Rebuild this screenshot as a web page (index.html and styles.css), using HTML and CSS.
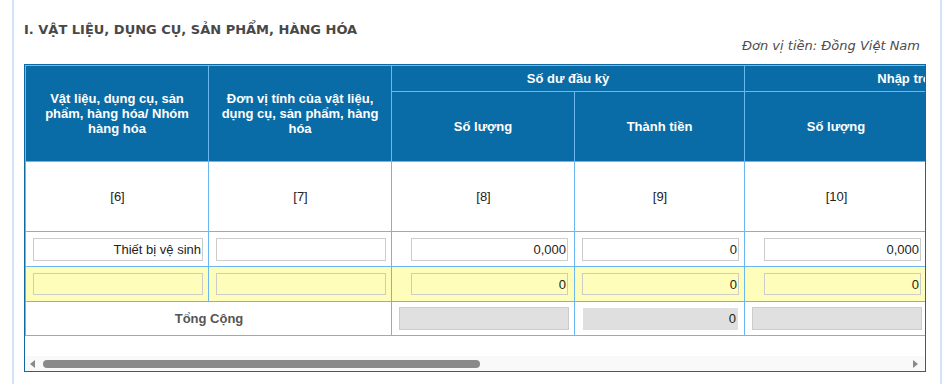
FILE: index.html
```html
<!DOCTYPE html>
<html lang="vi">
<head>
    <meta charset="UTF-8">
    <meta name="viewport" content="width=device-width, initial-scale=1.0">
    <title>Vật liệu, dụng cụ, sản phẩm, hàng hóa</title>
    <link rel="stylesheet" href="styles.css">
</head>
<body>
    <div class="page">
        <h3 class="section-title">I. VẬT LIỆU, DỤNG CỤ, SẢN PHẨM, HÀNG HÓA</h3>
        <div class="unit">Đơn vị tiền: Đồng Việt Nam</div>

        <div class="grid-box">
            <div class="grid-view">
                <table class="grid">
                    <colgroup>
                        <col class="w-a"><col class="w-a">
                        <col class="w-a"><col class="w-b">
                        <col class="w-a"><col class="w-b">
                        <col class="w-a"><col class="w-b">
                        <col class="w-a"><col class="w-b">
                    </colgroup>
                    <thead>
                        <tr class="head-top">
                            <th rowspan="2">Vật liệu, dụng cụ, sản phẩm, hàng hóa/ Nhóm hàng hóa</th>
                            <th rowspan="2">Đơn vị tính của vật liệu, dụng cụ, sản phẩm, hàng hóa</th>
                            <th colspan="2">Số dư đầu kỳ</th>
                            <th colspan="2">Nhập trong kỳ</th>
                            <th colspan="2">Xuất trong kỳ</th>
                            <th colspan="2">Số dư cuối kỳ</th>
                        </tr>
                        <tr class="head-sub">
                            <th>Số lượng</th><th>Thành tiền</th>
                            <th>Số lượng</th><th>Thành tiền</th>
                            <th>Số lượng</th><th>Thành tiền</th>
                            <th>Số lượng</th><th>Thành tiền</th>
                        </tr>
                    </thead>
                    <tbody>
                        <tr class="col-no">
                            <td>[6]</td><td>[7]</td><td>[8]</td><td>[9]</td><td>[10]</td>
                            <td>[11]</td><td>[12]</td><td>[13]</td><td>[14]</td><td>[15]</td>
                        </tr>
                        <tr class="row-item">
                            <td><input class="txt" type="text" value="Thiết bị vệ sinh"></td>
                            <td><input class="txt" type="text" value=""></td>
                            <td><input class="num" type="text" value="0,000"></td>
                            <td><input class="num" type="text" value="0"></td>
                            <td><input class="num" type="text" value="0,000"></td>
                            <td><input class="num" type="text" value="0"></td>
                            <td><input class="num" type="text" value="0,000"></td>
                            <td><input class="num" type="text" value="0"></td>
                            <td><input class="num" type="text" value="0,000"></td>
                            <td><input class="num" type="text" value="0"></td>
                        </tr>
                        <tr class="row-new">
                            <td><input class="txt" type="text" value=""></td>
                            <td><input class="txt" type="text" value=""></td>
                            <td><input class="num" type="text" value="0"></td>
                            <td><input class="num" type="text" value="0"></td>
                            <td><input class="num" type="text" value="0"></td>
                            <td><input class="num" type="text" value="0"></td>
                            <td><input class="num" type="text" value="0"></td>
                            <td><input class="num" type="text" value="0"></td>
                            <td><input class="num" type="text" value="0"></td>
                            <td><input class="num" type="text" value="0"></td>
                        </tr>
                        <tr class="row-total">
                            <td colspan="2" class="total-label">Tổng Cộng</td>
                            <td><input class="sum" type="text" value="" readonly></td>
                            <td><span class="sum-plain">0</span></td>
                            <td><input class="sum" type="text" value="" readonly></td>
                            <td><span class="sum-plain">0</span></td>
                            <td><input class="sum" type="text" value="" readonly></td>
                            <td><span class="sum-plain">0</span></td>
                            <td><input class="sum" type="text" value="" readonly></td>
                            <td><span class="sum-plain">0</span></td>
                        </tr>
                    </tbody>
                </table>
            </div>
            <div class="hscroll">
                <svg class="arrow" width="5" height="8" viewBox="0 0 5 8"><path d="M5 0 L0 4 L5 8 Z" fill="#8a8a8a"/></svg>
                <div class="track"><div class="thumb"></div></div>
                <svg class="arrow" width="5" height="8" viewBox="0 0 5 8"><path d="M0 0 L5 4 L0 8 Z" fill="#8a8a8a"/></svg>
            </div>
        </div>
    </div>
</body>
</html>
```

FILE: styles.css
```css
body {
    margin: 0;
    font-family: "Liberation Sans", Arial, sans-serif;
    font-size: 13px;
    background-color: #fff;
}


.page {
    box-sizing: border-box;
    width: 930px;
    min-height: 384px;
    margin-left: 12px;
    padding: 22px 14px 0 10px;
    border-left: 2px solid #cfe4f9;
    border-right: 2px solid #cfe4f9;
}


.section-title {
    margin: 0;
    font-family: "DejaVu Sans", Verdana, sans-serif;
    font-size: 13px;
    font-weight: bold;
    line-height: 16px;
    color: #484848;
}


.unit {
    padding-right: 6px;
    margin-bottom: 10px;
    text-align: right;
    font-family: "DejaVu Sans", Verdana, sans-serif;
    font-size: 13px;
    font-style: italic;
    line-height: 16px;
    color: #4d4d4d;
}


.grid-box {
    border: 1px solid #0f6aa1;
    overflow: hidden;
}


.grid-view {
    overflow: hidden;
    padding-bottom: 20px;
}


.grid {
    border-collapse: collapse;
    table-layout: fixed;
    width: 1765px;
}

.w-a {
    width: 183px;
}

.w-b {
    width: 170px;
}


.grid th {
    background-color: #0a6ca6;
    color: #fff;
    font-weight: bold;
    border: 1px solid #6ab7f2;
    padding: 0 10px;
    line-height: 15px;
    text-align: center;
}

.head-top th {
    height: 25px;
}

.head-sub th {
    height: 69px;
}


.grid td {
    border: 1px solid #6ab7f2;
    padding: 0 6px 0 7px;
    text-align: right;
    color: #222;
}

.col-no td {
    height: 69px;
    text-align: center;
}

.row-item td,
.row-new td {
    height: 34px;
}

.row-new td {
    background-color: #fffdba;
}

.row-total td {
    height: 33px;
}

.grid td.total-label {
    text-align: center;
    font-weight: bold;
    color: #555;
}


.grid input {
    box-sizing: border-box;
    height: 23px;
    padding: 0 1px;
    margin: 0;
    border: 1px solid #ccc;
    background-color: #fff;
    font-family: "Liberation Sans", Arial, sans-serif;
    font-size: 13px;
    color: #222;
    text-align: right;
    vertical-align: middle;
}

.grid input.txt {
    width: 170px;
}

.grid input.num {
    width: 157px;
}

.row-new input {
    background-color: transparent;
    height: 22px;
}

.grid input.sum {
    width: 170px;
    height: 23px;
    background-color: #e0e0e0;
}

.sum-plain {
    display: inline-block;
    box-sizing: border-box;
    width: 155px;
    height: 22px;
    padding-right: 2px;
    line-height: 22px;
    background-color: #dfdfdf;
    vertical-align: middle;
}


.hscroll {
    display: flex;
    align-items: center;
    height: 15px;
    padding: 0 7px 0 5px;
    background-color: #f9f9f9;
}

.track {
    flex: 1;
    margin: 0 8px;
}

.thumb {
    width: 437px;
    height: 8px;
    border-radius: 4px;
    background-color: #8a8a8a;
}
```
